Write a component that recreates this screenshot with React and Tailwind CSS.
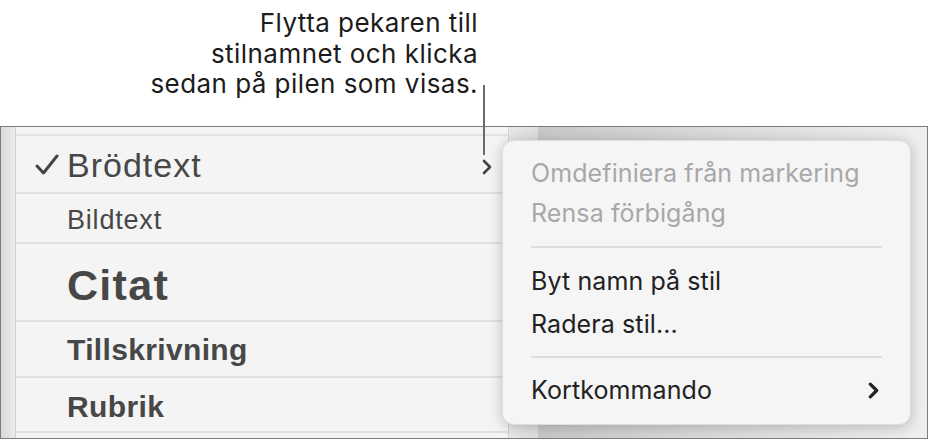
import React from "react";

const sf = { fontFamily: "Inter, 'Noto Sans', sans-serif" };
const hv = { fontFamily: "'Liberation Sans', Arial, sans-serif" };

function Chevron({ className, sw = 2.6 }) {
  return (
    <svg className={className} viewBox="0 0 10 16" fill="none">
      <polyline points="2,2 8,8 2,14" stroke="currentColor" strokeWidth={sw} strokeLinecap="round" strokeLinejoin="round" />
    </svg>
  );
}

export default function App() {
  return (
    <div className="relative w-[928px] h-[439px] bg-white overflow-hidden">
      {/* annotation */}
      <div className="h-[126px] w-[478px] pt-[8px] text-right text-[26px] leading-[30.5px] tracking-[0.45px] text-[#1c1c1c]" style={sf}>
        <div>Flytta pekaren till</div>
        <div>stilnamnet och klicka</div>
        <div>sedan på pilen som visas.</div>
      </div>

      {/* frame */}
      <div className="flex h-[313px] border-[1.5px] border-[#7c7c7c]">
        <div className="w-[15px] bg-gradient-to-r from-[#d9d9d9] to-[#ebebeb] border-r border-[#cfcfcf]" />
        <div className="w-[492px] bg-[#f4f4f4] flex flex-col text-[#474747]" style={hv}>
          <div className="h-[9px] border-b-2 border-[#e2e2e2]" />
          <div className="h-[58px] border-b-2 border-[#e0e0e0] pt-[12px] pl-[19px] flex items-start relative">
            <svg className="absolute left-[19px] top-[18px] w-[24px] h-[22px]" viewBox="0 0 24 22" fill="none">
              <polyline points="2,12 8.5,19 22,2" stroke="#444" strokeWidth="3" strokeLinecap="round" strokeLinejoin="round" />
            </svg>
            <span className="ml-[32px] text-[34px] leading-none tracking-[1px]">Brödtext</span>
            <Chevron className="absolute left-[466px] top-[23px] w-[10px] h-[16px] text-[#444]" />
          </div>
          <div className="h-[50px] border-b-2 border-[#e0e0e0] pt-[13px] pl-[51px]">
            <span className="text-[27px] leading-none tracking-[0.8px]">Bildtext</span>
          </div>
          <div className="h-[78px] border-b-2 border-[#e0e0e0] pt-[20px] pl-[51px]">
            <span className="text-[43px] leading-none font-bold tracking-[1.3px]">Citat</span>
          </div>
          <div className="h-[56px] border-b-2 border-[#e0e0e0] pt-[13px] pl-[51px]">
            <span className="text-[30px] leading-none font-bold tracking-[0.35px]">Tillskrivning</span>
          </div>
          <div className="h-[55px] border-b-2 border-[#e0e0e0] pt-[14px] pl-[51px]">
            <span className="text-[30px] leading-none font-bold tracking-[0.4px]">Rubrik</span>
          </div>
          <div className="flex-1" />
        </div>
        <div className="w-[30px] bg-gradient-to-r from-[#e8e8e8] to-[#dedede] border-l border-[#d4d4d4]" />
        <div className="flex-1 bg-gradient-to-r from-[#c9c9c9] via-[#dddddd] to-[#efefef]" />
      </div>

      {/* leader line */}
      <div className="absolute left-[483px] top-[85px] w-[1.5px] h-[70px] bg-[#6a6a6a]" />

      {/* popup menu */}
      <div
        className="absolute left-[502px] top-[140px] w-[409px] rounded-[12px] bg-[#f5f5f5] shadow-[0_2px_14px_rgba(0,0,0,0.22)] border border-[#dedede] pt-[12px] pb-[14px] text-[25px] tracking-[0.1px]"
        style={sf}
      >
        <div className="h-[40px] leading-[40px] pl-[28px] text-[#a8a8a8]">Omdefiniera från markering</div>
        <div className="h-[40px] leading-[40px] pl-[28px] text-[#a8a8a8]">Rensa förbigång</div>
        <div className="h-[28px] flex items-center mx-[28px]">
          <div className="h-[2px] w-full bg-[#dcdcdc]" />
        </div>
        <div className="h-[43px] leading-[40px] pl-[28px] text-[#222]">Byt namn på stil</div>
        <div className="h-[40px] leading-[40px] pl-[28px] text-[#222]">Radera stil...</div>
        <div className="h-[26px] flex items-center mx-[28px]">
          <div className="h-[2px] w-full bg-[#dcdcdc]" />
        </div>
        <div className="h-[40px] leading-[40px] pl-[28px] pr-[31px] text-[#222] flex items-center justify-between">
          <span>Kortkommando</span>
          <Chevron className="w-[11px] h-[17px] text-[#222]" sw={3} />
        </div>
      </div>
    </div>
  );
}
